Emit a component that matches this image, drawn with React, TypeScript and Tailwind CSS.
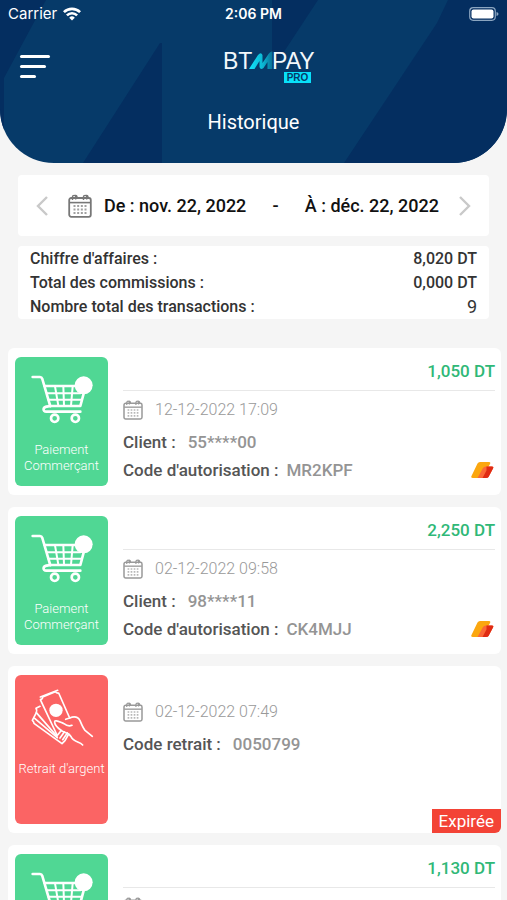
import type { ReactNode } from "react";

type Transaction = {
  kind: "payment" | "withdrawal";
  amount?: string;
  date: string;
  fields: { label: string; value: string }[];
  expired?: boolean;
};

const transactions: Transaction[] = [
  {
    kind: "payment",
    amount: "1,050 DT",
    date: "12-12-2022 17:09",
    fields: [
      { label: "Client :", value: "55****00" },
      { label: "Code d'autorisation :", value: "MR2KPF" },
    ],
  },
  {
    kind: "payment",
    amount: "2,250 DT",
    date: "02-12-2022 09:58",
    fields: [
      { label: "Client :", value: "98****11" },
      { label: "Code d'autorisation :", value: "CK4MJJ" },
    ],
  },
  {
    kind: "withdrawal",
    date: "02-12-2022 07:49",
    fields: [{ label: "Code retrait :", value: "0050799" }],
    expired: true,
  },
  {
    kind: "payment",
    amount: "1,130 DT",
    date: "",
    fields: [],
  },
];

const totals = [
  { label: "Chiffre d'affaires :", value: "8,020 DT" },
  { label: "Total des commissions :", value: "0,000 DT" },
];

function CalendarIcon({ className = "" }: { className?: string }) {
  return (
    <svg viewBox="0 0 24 24" fill="none" stroke="currentColor" className={`shrink-0 ${className}`}>
      <rect x="1.2" y="4" width="21.6" height="18.8" rx="2" strokeWidth="1.8" />
      <path d="M1.500 8.600h21" strokeWidth="1.600" />
      <path d="M4.500 6V3a1.600 1.600 0 0 1 3.200 0v2.500M9 4V2.800a1.500 1.500 0 0 0-2-1.300M15.500 6V3a1.600 1.600 0 0 1 3.200 0v2.500M20 4V2.800a1.500 1.500 0 0 0-2-1.300" strokeWidth="1.400" />
      <path d="M5.500 12h13M5.500 15.500h13M5.500 19h13" strokeWidth="2" strokeDasharray="2 1.670" strokeOpacity=".7" />
    </svg>
  );
}

function CartIcon() {
  return (
    <svg viewBox="-3 0 225 195" fill="none" stroke="#fff" strokeWidth="8" strokeLinecap="round" strokeLinejoin="round" className="h-[65px] w-[75px]">
      <path d="M23 36h22q5 0 7 6l24 82" />
      <path d="M59 63h100M178 78l-12 45H72" />
      <path d="M66 85h100M70 104h98M90 64l10 58M115 64l2 58M143 64l-5 58" strokeWidth="6" />
      <path d="M70 124c-18 0-18 16-6 16h102" />
      <circle cx="89" cy="160" r="11" fill="#50d794" />
      <circle cx="151" cy="160" r="11" fill="#50d794" />
      <circle cx="176" cy="61" r="27" fill="#fff" stroke="none" />
    </svg>
  );
}

function CashIcon() {
  return (
    <svg viewBox="-3 0 225 210" fill="none" stroke="#fff" strokeWidth="5" strokeLinecap="round" strokeLinejoin="round" className="h-[70px] w-[75px]">
      {/* notes */}
      <path d="M96 156 46 50q7-2 7-8l38-16q4 5 10 4l33 75-12 4" />
      <path d="m46 42 52-20M45 70l-12 6q4 6 1 13l62 71" />
      <path d="m34 89-12 23q5 4 5 9l84 61 9-9 11-20" />
      <path d="m29 106 68 58" />
      {/* hand */}
      <path d="M134 105q22-9 31 8 9 22 15 29l22 18" />
      <path d="M141 127q-12 5-24-5c-15-6-29-14-28-4 1 12 13 19 22 26 11 6 22 6 27 17 8 17 25 14 35 25" />
      <path d="m98 156 10-13M105 165l13-18M113 170l14-20" />
      <circle cx="93" cy="82" r="20" fill="#fff" stroke="none" />
    </svg>
  );
}

function CardMark() {
  return (
    <svg viewBox="0 0 23 17" className="h-[17px] w-[23px]">
      <path d="M6.500 1.500Q7.300 0 9 0h9q2 0 1 2l-7 12.500Q11 16 9 16H2q-2.500 0-1.500-2Z" fill="#fba70f" />
      <path d="M12 6q1-1.500 3-1.500h6q2 0 1 2L17.500 15Q17 16 15 16H6.500Z" fill="#fb6836" />
      <path d="M15.500 4.500H21q2 0 1 2L17.500 15Q17 16 15 16h-3.500l4-7.500Z" fill="#e02b13" />
    </svg>
  );
}

function Logo() {
  return (
    <svg viewBox="-1 -3 94 37" role="img" aria-label="BTM Pay Pro" className="h-[37px] w-[94px] overflow-visible">
      <defs>
        <linearGradient id="logo-m" x1="0" x2="1">
          <stop offset="0" stopColor="#12e4fb" />
          <stop offset="0.6" stopColor="#0bb6d2" />
          <stop offset="1" stopColor="#096d94" />
        </linearGradient>
      </defs>
      <g fill="#f3f8fc" fontFamily="Liberation Sans, sans-serif" fontSize="23">
        <text x="0" y="18">BT</text>
        <text x="49" y="18">PAY</text>
      </g>
      <path d="m26 18 9-14q3-3.500 4.500 0v8l6-9q2-3 4-2.500V18h-5v-7l-4 6q-3 2.500-4-1v-6l-5 8Z" fill="url(#logo-m)" />
      <rect x="61" y="21" width="27" height="11" fill="#08e1fa" />
      <text x="74.500" y="30" textAnchor="middle" fill="#06396a" fontFamily="Liberation Sans, sans-serif" fontSize="10" fontWeight="700">PRO</text>
    </svg>
  );
}

function Chevron({ d }: { d: string }) {
  return (
    <svg viewBox="0 0 12 20" fill="none" stroke="#c9c9c9" strokeWidth="2.400" className="h-5 w-3">
      <path d={d} />
    </svg>
  );
}

function StatusBar() {
  return (
    <div className="grid h-7 grid-cols-3 items-center px-2 text-[15px]">
      <div className="flex items-center gap-1.5 font-[Inter]">
        <span>Carrier</span>
        <svg viewBox="0 0 18 14" fill="none" stroke="#fff" strokeWidth="2.600" className="h-3.5 w-[18px]">
          <path d="M.9 5.200a11.500 11.500 0 0 1 16.200 0M3.900 8.400a7.200 7.200 0 0 1 10.200 0" />
          <path d="M9 13.500 6.200 10.700a4 4 0 0 1 5.600 0Z" fill="#fff" stroke="none" />
        </svg>
      </div>
      <span className="text-center font-[Inter] text-sm font-semibold">2:06 PM</span>
      <svg viewBox="0 0 30 14" className="h-3.5 w-[30px] justify-self-end">
        <rect x=".7" y=".7" width="25.600" height="12.600" rx="3.500" fill="none" stroke="#8ba5c0" strokeWidth="1.200" />
        <rect x="2.500" y="2.500" width="22" height="9" rx="2" fill="#fff" />
        <path d="M27.500 5v4q2-.6 2-2t-2-2" fill="#8ba5c0" />
      </svg>
    </div>
  );
}

function Header() {
  return (
    <header className="relative overflow-hidden rounded-b-[54px] bg-[#063a69] text-white">
      <svg viewBox="0 0 507 163" preserveAspectRatio="none" className="absolute inset-0 h-full w-full" fill="#042e60">
        <path d="M0 0h46L4 78v85H0ZM160 43h2v120H83ZM272 0h46l-46 70ZM448 0h59v163H344l93-140Z" />
      </svg>
      <div className="relative">
        <StatusBar />
        <div className="grid grid-cols-3 items-center px-5 pt-5">
          <button type="button" aria-label="Menu" className="flex flex-col gap-[7px]">
            <span className="h-[3px] w-[30px] rounded bg-white" />
            <span className="h-[3px] w-[26px] rounded bg-white" />
            <span className="h-[3px] w-4 rounded bg-white" />
          </button>
          <div className="flex justify-center pl-8">
            <Logo />
          </div>
        </div>
        <h1 className="pt-[22px] pb-[26px] text-center text-xl leading-[30px]">Historique</h1>
      </div>
    </header>
  );
}

function DateRange() {
  return (
    <div className="flex h-[61px] items-center justify-between rounded bg-white px-[18px] text-lg font-medium text-[#111]">
      <button type="button" aria-label="Période précédente">
        <Chevron d="M11 1 2 10l9 9" />
      </button>
      <div className="flex grow items-center justify-between px-5">
        <button type="button" className="flex items-center gap-3">
          <CalendarIcon className="size-6 text-[#777]" />
          De : nov. 22, 2022
        </button>
        <span>-</span>
        <button type="button">À : déc. 22, 2022</button>
      </div>
      <button type="button" aria-label="Période suivante">
        <Chevron d="m1 1 9 9-9 9" />
      </button>
    </div>
  );
}

function Summary() {
  return (
    <dl className="rounded bg-white px-3 pt-px text-base leading-6 font-medium text-[#333]">
      {totals.map((t) => (
        <div key={t.label} className="flex justify-between">
          <dt>{t.label}</dt>
          <dd>{t.value}</dd>
        </div>
      ))}
      <div className="flex justify-between">
        <dt>Nombre total des transactions :</dt>
        <dd className="text-lg leading-6 font-normal">9</dd>
      </div>
    </dl>
  );
}

function Tile({ className, children }: { className: string; children: ReactNode }) {
  return (
    <div className={`flex w-[93px] shrink-0 flex-col items-center rounded-md pt-2 text-center text-[13px] leading-4 font-light text-white ${className}`}>
      {children}
    </div>
  );
}

function TransactionCard({ tx }: { tx: Transaction }) {
  const isPayment = tx.kind === "payment";

  return (
    <li className="relative flex gap-[15px] rounded-md bg-white py-[9px] pr-1.5 pl-[7px]">
      {isPayment ? (
        <Tile className="min-h-[129px] gap-3 bg-[#50d794]">
          <CartIcon />
          <span>Paiement<br />Commerçant</span>
        </Tile>
      ) : (
        <Tile className="min-h-[149px] gap-2 bg-[#fb6464]">
          <CashIcon />
          <span className="whitespace-nowrap">Retrait d'argent</span>
        </Tile>
      )}

      <div className={`flex-1 ${isPayment ? "" : "pt-[18px]"}`}>
        {tx.amount && (
          <p className="h-[34px] border-b border-[#e8e8e8] text-right text-[17px] leading-7 font-medium text-[#2fb877]">
            {tx.amount}
          </p>
        )}
        <div className="flex h-[37px] items-center gap-3 text-base font-light text-[#999]">
          <CalendarIcon className="size-5" />
          {tx.date}
        </div>
        <dl className="text-[17px] leading-7 font-medium">
          {tx.fields.map((f) => (
            <div key={f.label} className={f.value.length === 6 ? "flex gap-2" : "flex gap-3"}>
              <dt className="text-[#555]">{f.label}</dt>
              <dd className="text-[#949494]">{f.value}</dd>
            </div>
          ))}
        </dl>
      </div>

      {isPayment && (
        <div className="absolute right-[7px] bottom-4">
          <CardMark />
        </div>
      )}
      {tx.expired && (
        <span className="absolute right-0 bottom-0 rounded-br-md bg-[#f34336] px-[7px] text-[17px] leading-6 text-white">
          Expirée
        </span>
      )}
    </li>
  );
}

export default function App() {
  return (
    <div className="h-screen overflow-hidden bg-[#f5f5f5] font-[Roboto,sans-serif]">
      <Header />
      <main>
        <section className="flex flex-col gap-2.5 px-[18px] pt-3">
          <DateRange />
          <Summary />
        </section>
        <ul className="flex flex-col gap-3 pt-[29px] pr-1.5 pl-2">
          {transactions.map((tx) => (
            <TransactionCard key={tx.amount ?? tx.date} tx={tx} />
          ))}
        </ul>
      </main>
    </div>
  );
}
